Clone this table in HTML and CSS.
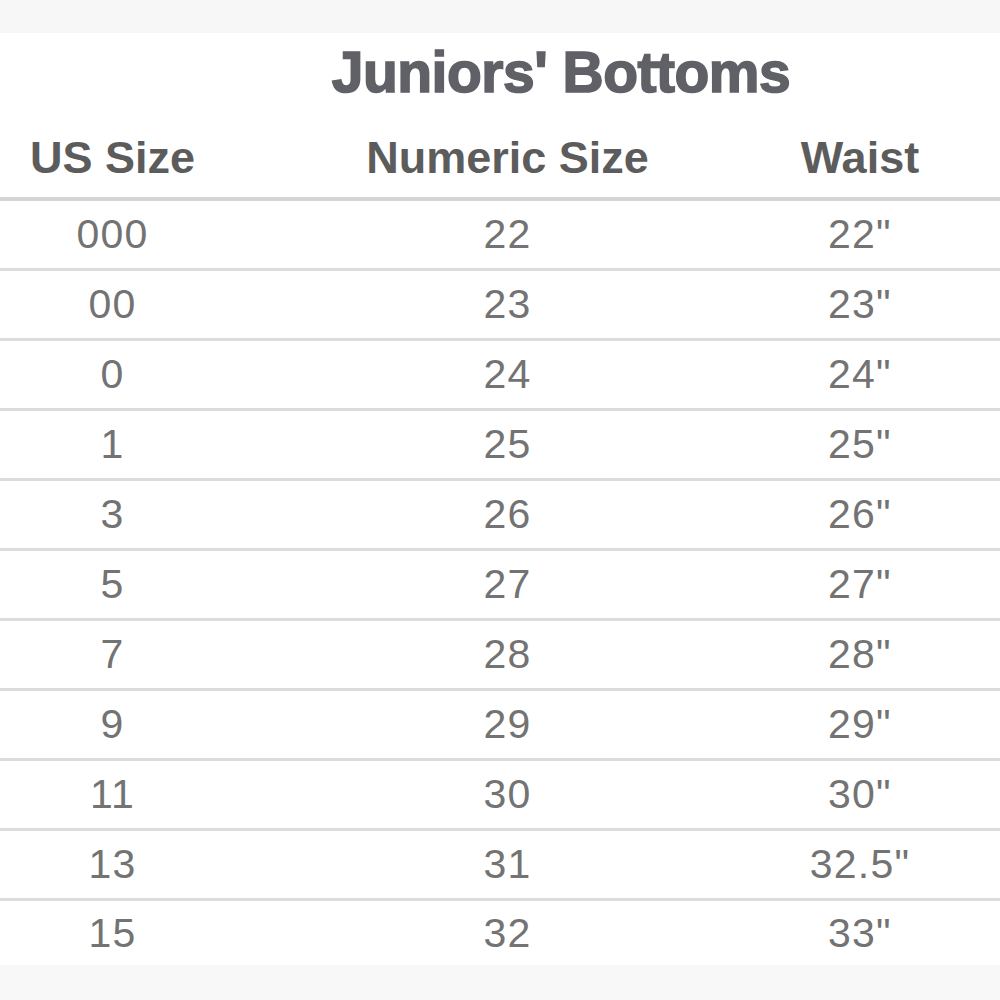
FILE: index.html
```html
<!DOCTYPE html>
<html>
<head>
<meta charset="utf-8">
<link rel="stylesheet" href="styles.css">
</head>
<body>
<div class="band"></div>
<div class="sheet">
  <div class="title">Juniors' Bottoms</div>
  <div class="row head">
    <div class="c1">US Size</div>
    <div class="c2">Numeric Size</div>
    <div class="c3">Waist</div>
  </div>
  <div class="row"><div class="c1">000</div><div class="c2">22</div><div class="c3">22"</div></div>
  <div class="row"><div class="c1">00</div><div class="c2">23</div><div class="c3">23"</div></div>
  <div class="row"><div class="c1">0</div><div class="c2">24</div><div class="c3">24"</div></div>
  <div class="row"><div class="c1">1</div><div class="c2">25</div><div class="c3">25"</div></div>
  <div class="row"><div class="c1">3</div><div class="c2">26</div><div class="c3">26"</div></div>
  <div class="row"><div class="c1">5</div><div class="c2">27</div><div class="c3">27"</div></div>
  <div class="row"><div class="c1">7</div><div class="c2">28</div><div class="c3">28"</div></div>
  <div class="row"><div class="c1">9</div><div class="c2">29</div><div class="c3">29"</div></div>
  <div class="row"><div class="c1">11</div><div class="c2">30</div><div class="c3">30"</div></div>
  <div class="row"><div class="c1">13</div><div class="c2">31</div><div class="c3">32.5"</div></div>
  <div class="row last"><div class="c1">15</div><div class="c2">32</div><div class="c3">33"</div></div>
</div>
</body>
</html>
```
FILE: styles.css
```css
html, body {
  margin: 0;
  padding: 0;
  background: #f8f8f8;
  font-family: "Liberation Sans", Arial, sans-serif;
}
.band {
  height: 33px;
  background: #f7f7f7;
}
.sheet {
  background: #ffffff;
}
.title {
  height: 78px;
  line-height: 78px;
  padding-left: 122px;
  text-align: center;
  font-size: 57px;
  font-weight: bold;
  color: #606067;
  -webkit-text-stroke: 1.6px #606067;
  letter-spacing: -0.5px;
}
.row {
  display: grid;
  grid-template-columns: 225px 565px 140px;
  height: 67px;
  line-height: 67px;
  border-bottom: 3px solid #dcdcdc;
  font-size: 41px;
  color: #737373;
  text-align: center;
  letter-spacing: 1.2px;
}
.row.head {
  height: 78px;
  line-height: 78px;
  padding-top: 8px;
  border-bottom: 4px solid #d4d4d4;
  font-size: 45px;
  font-weight: bold;
  color: #5c5c5c;
  letter-spacing: 0;
}
.row.last {
  height: 64px;
  line-height: 64px;
  border-bottom: none;
}
```
